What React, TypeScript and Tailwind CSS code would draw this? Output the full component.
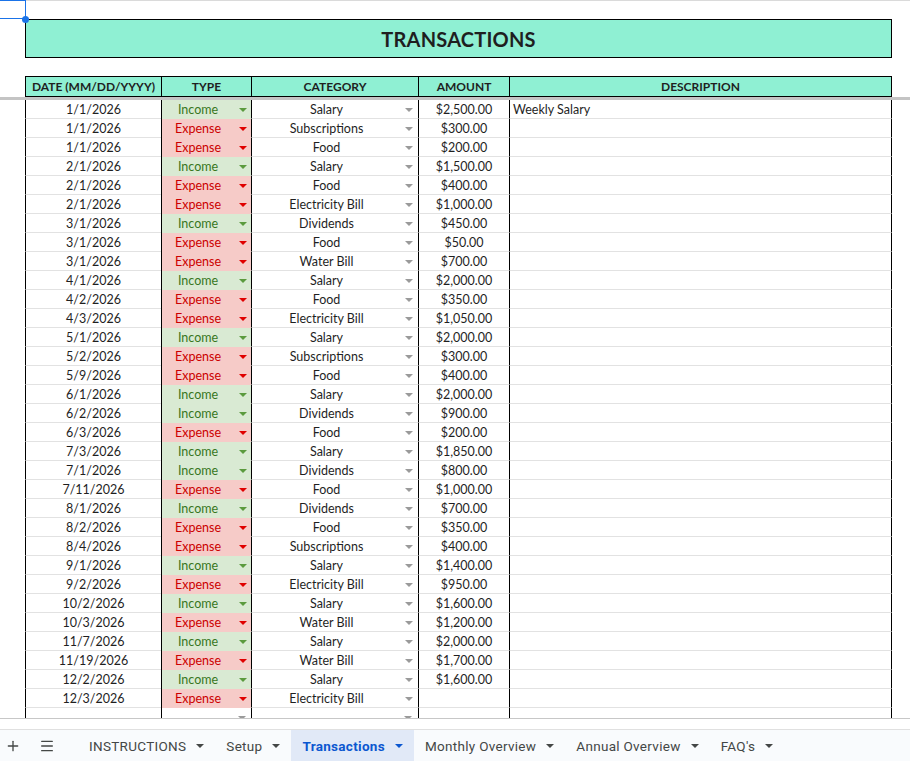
import { Menu, Plus } from "lucide-react";

type Row = {
  date: string;
  type: "Income" | "Expense";
  category: string;
  amount?: string;
  description?: string;
};

const rows: Row[] = [
  { date: "1/1/2026", type: "Income", category: "Salary", amount: "$2,500.00", description: "Weekly Salary" },
  { date: "1/1/2026", type: "Expense", category: "Subscriptions", amount: "$300.00" },
  { date: "1/1/2026", type: "Expense", category: "Food", amount: "$200.00" },
  { date: "2/1/2026", type: "Income", category: "Salary", amount: "$1,500.00" },
  { date: "2/1/2026", type: "Expense", category: "Food", amount: "$400.00" },
  { date: "2/1/2026", type: "Expense", category: "Electricity Bill", amount: "$1,000.00" },
  { date: "3/1/2026", type: "Income", category: "Dividends", amount: "$450.00" },
  { date: "3/1/2026", type: "Expense", category: "Food", amount: "$50.00" },
  { date: "3/1/2026", type: "Expense", category: "Water Bill", amount: "$700.00" },
  { date: "4/1/2026", type: "Income", category: "Salary", amount: "$2,000.00" },
  { date: "4/2/2026", type: "Expense", category: "Food", amount: "$350.00" },
  { date: "4/3/2026", type: "Expense", category: "Electricity Bill", amount: "$1,050.00" },
  { date: "5/1/2026", type: "Income", category: "Salary", amount: "$2,000.00" },
  { date: "5/2/2026", type: "Expense", category: "Subscriptions", amount: "$300.00" },
  { date: "5/9/2026", type: "Expense", category: "Food", amount: "$400.00" },
  { date: "6/1/2026", type: "Income", category: "Salary", amount: "$2,000.00" },
  { date: "6/2/2026", type: "Income", category: "Dividends", amount: "$900.00" },
  { date: "6/3/2026", type: "Expense", category: "Food", amount: "$200.00" },
  { date: "7/3/2026", type: "Income", category: "Salary", amount: "$1,850.00" },
  { date: "7/1/2026", type: "Income", category: "Dividends", amount: "$800.00" },
  { date: "7/11/2026", type: "Expense", category: "Food", amount: "$1,000.00" },
  { date: "8/1/2026", type: "Income", category: "Dividends", amount: "$700.00" },
  { date: "8/2/2026", type: "Expense", category: "Food", amount: "$350.00" },
  { date: "8/4/2026", type: "Expense", category: "Subscriptions", amount: "$400.00" },
  { date: "9/1/2026", type: "Income", category: "Salary", amount: "$1,400.00" },
  { date: "9/2/2026", type: "Expense", category: "Electricity Bill", amount: "$950.00" },
  { date: "10/2/2026", type: "Income", category: "Salary", amount: "$1,600.00" },
  { date: "10/3/2026", type: "Expense", category: "Water Bill", amount: "$1,200.00" },
  { date: "11/7/2026", type: "Income", category: "Salary", amount: "$2,000.00" },
  { date: "11/19/2026", type: "Expense", category: "Water Bill", amount: "$1,700.00" },
  { date: "12/2/2026", type: "Income", category: "Salary", amount: "$1,600.00" },
  { date: "12/3/2026", type: "Expense", category: "Electricity Bill" },
];

const tabs = ["INSTRUCTIONS", "Setup", "Transactions", "Monthly Overview", "Annual Overview", "FAQ's"];

function Caret({ className }: { className: string }) {
  return (
    <svg width="8" height="4" viewBox="0 0 8 4" className={className}>
      <path d="M0 0h8L4 4z" fill="currentColor" />
    </svg>
  );
}

function DataRow({ row }: { row: Row }) {
  const income = row.type === "Income";
  return (
    <div className="flex h-[19px] pl-[25px] text-[12.5px] leading-[18px] text-[#1f1f1f]">
      <div className="w-[136px] border-l border-black border-b border-b-[#e2e2e2] pt-[1px] text-center">{row.date}</div>
      <div
        className={`w-[90px] border-l border-black flex items-center pt-[1px] ${
          income ? "bg-[#d9ead3] text-[#38761d]" : "bg-[#f6cbc8] text-[#cc0000]"
        }`}
      >
        <span className="w-[72px] text-center">{row.type}</span>
        <Caret className={income ? "ml-[5px] text-[#5b9a3e]" : "ml-[5px] text-[#e00000]"} />
      </div>
      <div className="w-[167px] border-l border-black border-b border-b-[#e2e2e2] flex items-center pt-[1px]">
        <span className="w-[149px] text-center">{row.category}</span>
        <Caret className="ml-[4px] text-[#9a9a9a]" />
      </div>
      <div className="w-[91px] border-l border-black border-b border-b-[#e2e2e2] pt-[1px] text-center">{row.amount}</div>
      <div className="w-[383px] border-x border-black border-b border-b-[#e2e2e2] pl-[3px] pt-[1px]">{row.description}</div>
    </div>
  );
}

export default function App() {
  return (
    <div className="relative w-[910px] h-[761px] bg-white overflow-hidden flex flex-col font-['Lato',sans-serif]">
      {/* selected cell overlay */}
      <div className="absolute left-0 top-0 w-[26px] h-[19px] border border-l-0 border-[#1a73e8]" />
      <div className="absolute left-[22px] top-[16px] w-[7px] h-[7px] rounded-full bg-[#1a73e8]" />

      <div className="h-[19px] shrink-0 border-t border-[#dadada]" />
      <div className="pl-[25px] shrink-0">
        <div className="w-[867px] h-[39px] border border-black bg-[#8ff0d3] flex items-center justify-center pt-[1px] text-[20px] font-bold text-[#1f1f1f] tracking-[0.2px]">
          TRANSACTIONS
        </div>
      </div>
      <div className="h-[18px] shrink-0" />

      <div className="flex h-[21px] pl-[25px] shrink-0 text-[12px] font-bold text-[#1f1f1f] leading-[19px]">
        <div className="w-[136px] border-y border-l border-black bg-[#8ff0d3] text-center">DATE (MM/DD/YYYY)</div>
        <div className="w-[90px] border-y border-l border-black bg-[#8ff0d3] text-center">TYPE</div>
        <div className="w-[167px] border-y border-l border-black bg-[#8ff0d3] text-center">CATEGORY</div>
        <div className="w-[91px] border-y border-l border-black bg-[#8ff0d3] text-center">AMOUNT</div>
        <div className="w-[383px] border border-black bg-[#8ff0d3] text-center">DESCRIPTION</div>
      </div>
      <div className="h-[3px] shrink-0 bg-[#c4c4c4]" />

      <div className="h-[618px] shrink-0 overflow-hidden">
        {rows.map((r, i) => (
          <DataRow key={i} row={r} />
        ))}
        <div className="flex h-[19px] pl-[25px]">
          <div className="w-[136px] border-l border-black" />
          <div className="w-[90px] border-l border-black flex items-center justify-end pr-[5px]">
            <Caret className="text-[#9a9a9a]" />
          </div>
          <div className="w-[167px] border-l border-black flex items-center justify-end pr-[6px]">
            <Caret className="text-[#9a9a9a]" />
          </div>
          <div className="w-[91px] border-l border-black" />
          <div className="w-[383px] border-x border-black" />
        </div>
      </div>
      <div className="h-[1px] shrink-0 bg-[#c7c7c7]" />
      <div className="h-[10px] shrink-0" />
      <div className="flex-1 border-t border-[#e0e0e0] bg-[#f9fbfd] flex items-stretch font-['Roboto',sans-serif] text-[13.5px] font-normal tracking-[0.3px] text-[#444746]">
        <div className="w-[26px] flex items-center justify-center">
          <Plus size={16} strokeWidth={2} />
        </div>
        <div className="w-[42px] flex items-center justify-center">
          <Menu size={16} strokeWidth={2} />
        </div>
        <div className="w-[10px]" />
        {tabs.map((t) => {
          const active = t === "Transactions";
          return (
            <div
              key={t}
              className={`flex items-center gap-[10px] px-[11px] pt-[1px] ${
                active ? "bg-[#e1e9f7] text-[#0b57d0] font-bold" : ""
              }`}
            >
              <span>{t}</span>
              <Caret className={active ? "text-[#0b57d0]" : "text-[#444746]"} />
            </div>
          );
        })}
      </div>
    </div>
  );
}
